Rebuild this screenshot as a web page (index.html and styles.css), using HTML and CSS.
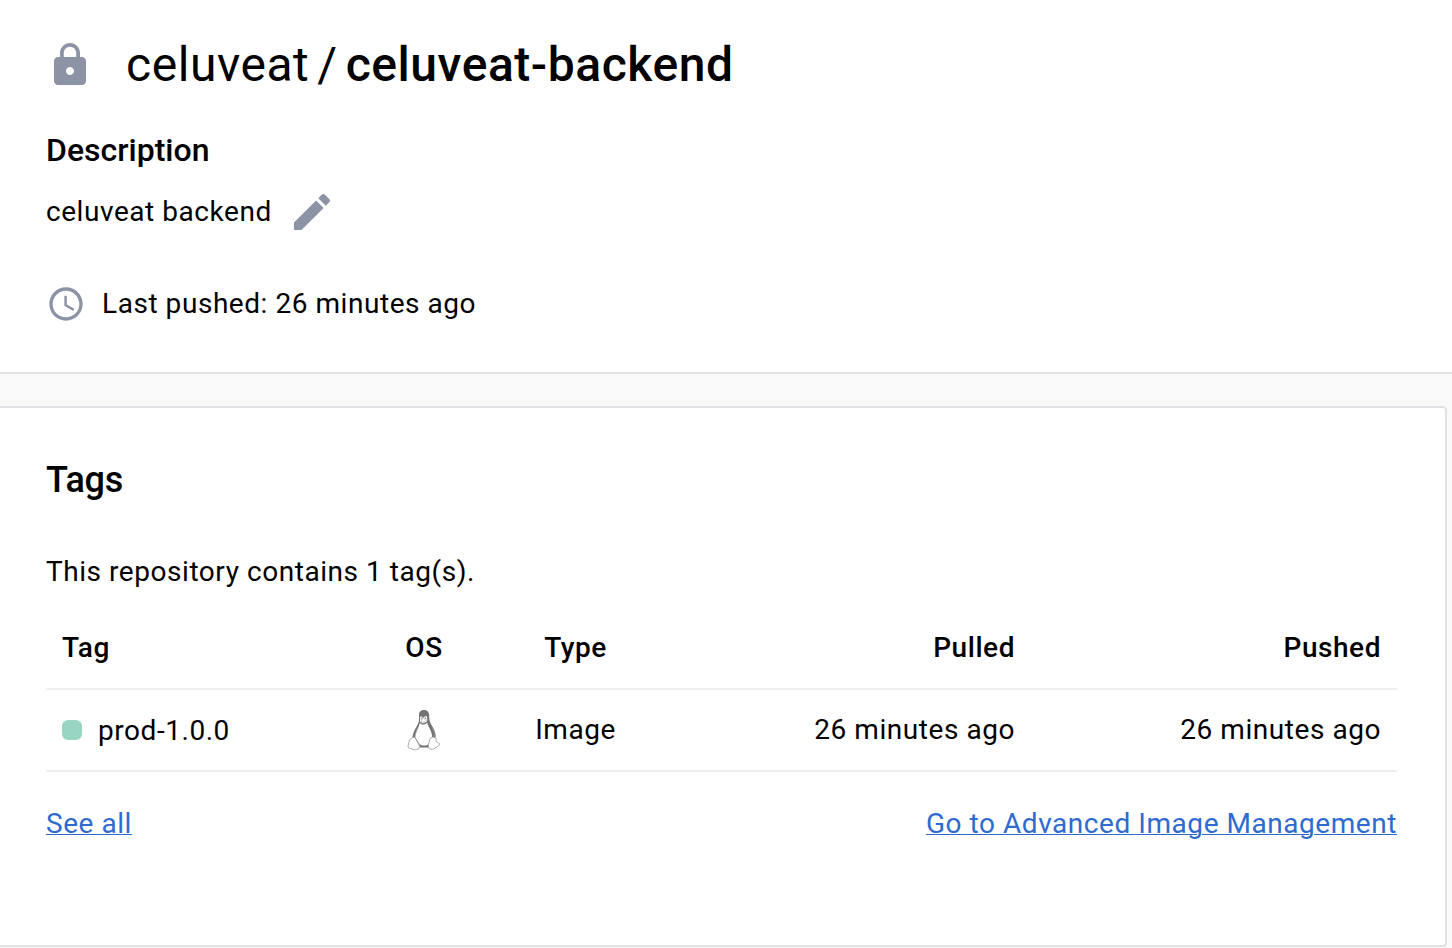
FILE: index.html
```html
<!DOCTYPE html>
<html lang="en">
<head>
<meta charset="utf-8">
<title>celuveat/celuveat-backend</title>
<link rel="stylesheet" href="styles.css">
</head>
<body>
<header class="repo">
  <div class="repo-title">
    <svg class="icon-lg" viewBox="0 0 24 24"><path d="M18 8h-1V6c0-2.76-2.24-5-5-5S7 3.240 7 6v2H6c-1.100 0-2 .9-2 2v10c0 1.100.9 2 2 2h12c1.100 0 2-.9 2-2V10c0-1.100-.9-2-2-2zm-6 9c-1.100 0-2-.9-2-2s.9-2 2-2 2 .9 2 2-.9 2-2 2zm3.100-9H8.900V6c0-1.710 1.390-3.100 3.100-3.100s3.100 1.390 3.100 3.100v2z"/></svg>
    <h1 class="name"><span class="owner">celuveat</span><span class="slash">/</span><span class="repo-name">celuveat-backend</span></h1>
  </div>
  <h2 class="subhead">Description</h2>
  <div class="description">
    <span class="description-text">celuveat backend</span>
    <svg class="icon-lg" viewBox="0 0 24 24"><path d="M3 17.250V21h3.750L17.810 9.940l-3.750-3.750L3 17.250zM20.710 7.040c.39-.39.39-1.020 0-1.410l-2.340-2.340c-.39-.39-1.020-.39-1.410 0l-1.830 1.830 3.750 3.750 1.830-1.830z"/></svg>
  </div>
  <div class="pushed">
    <svg class="icon-md" viewBox="0 0 24 24"><path d="M11.990 2C6.470 2 2 6.480 2 12s4.470 10 9.990 10C17.520 22 22 17.520 22 12S17.520 2 11.990 2zM12 20c-4.420 0-8-3.580-8-8s3.580-8 8-8 8 3.580 8 8-3.580 8-8 8zm.5-13H11v6l5.250 3.150.75-1.230-4.500-2.670z"/></svg>
    <span>Last pushed: 26 minutes ago</span>
  </div>
</header>
<main class="card">
  <h2 class="card-title">Tags</h2>
  <p class="summary">This repository contains 1 tag(s).</p>
  <div class="row head">
    <span>Tag</span><span class="center">OS</span><span class="center">Type</span><span class="right">Pulled</span><span class="right">Pushed</span>
  </div>
  <div class="row">
    <span class="tag"><i class="status"></i><span class="tag-name">prod-1.0.0</span></span>
    <span class="center os">
      <svg class="tux" viewBox="0 0 34 42">
        <path fill="#737373" d="M17 1c-4 0-5.200 2.500-5 6 .2 4 .2 6-1.700 9.200C8.200 20 5.300 24.800 5.600 29l3 5.500 4 4h9l4-8 3.200-3c-.3-5-2.300-8.500-4.600-12-1.700-2.600-1.900-5-2-8.500C22 3 20.500 1 17 1z"/>
        <path fill="#fff" d="M13 13.500c.7 2.600 5.200 3 7.200 0 .9 4.500 4.800 8.200 5 14.500l-3.500 7c-2 2-7 2-9 .3L8 28c.5-6 3.800-9 5-14.500z"/>
        <path fill="#fff" d="M13.300 9.800c-.8-2.300.8-3.300 2.100-1.500l.8.500 1.200-.8c1.300-1.900 3.400-1.100 2.600 1.300.8 1.500.6 4-3.200 5-3.200.2-4.700-2.300-3.500-4.500z"/>
        <path fill="none" stroke="#777" stroke-width=".8" stroke-dasharray="1 1" d="M13.800 10.800l2.600-1.500 3.100 1.600-3 2.200-2.700-1.300M14 13.500l2.500 1 3-1.500"/>
        <path fill="#737373" d="M14.300 8.500h1v1.300h-1zM18 8.500h1v1.300h-1z"/>
        <path fill="#fff" stroke="#999" stroke-width=".8" d="M2.500 31l3.300-2.800 2.400.6 2.800 5.200 1.900 3.200-1.700 3-3.700.7-6.100-2.300L1 37zM23 29.500l2.800-1.500 3 1 .5 3.300 3.700 3-2.800 2.600-4.600 2.600-3.600-.8-.8-3z"/>
        <path fill="none" stroke="#999" stroke-width=".8" d="M10 22c-2 2.500-2 5-1.800 6.500M25.300 19c2 3 2.300 6 1.500 8.700"/>
      </svg>
    </span>
    <span class="center">Image</span><span class="right">26 minutes ago</span><span class="right">26 minutes ago</span>
  </div>
  <div class="links">
    <a class="link" href="#">See all</a>
    <a class="link" href="#">Go to Advanced Image Management</a>
  </div>
</main>
</body>
</html>
```
FILE: styles.css
```css
* { box-sizing: border-box; }
body {
  margin: 0;
  height: 948px;
  overflow: hidden;
  background: #f9f9fa;
  color: #000;
  font: 400 28px/40px Roboto, sans-serif;
  letter-spacing: 0.55px;
}
h1, h2, p { margin: 0; }
svg { display: block; flex: none; }
.repo {
  height: 374px;
  padding: 41px 46px 0;
  background: #fff;
  border-bottom: 2px solid #e1e2e6;
}
.repo svg { fill: #8b93a5; }
.icon-lg { width: 48px; height: 48px; }
.icon-md { width: 40px; height: 40px; }
.repo-title { display: flex; gap: 32px; }
.name { display: flex; font-size: 48px; line-height: 48px; font-weight: 400; letter-spacing: 0.55px; }
.slash { margin: 0 8px; }
.repo-name { font-weight: 500; }
.subhead { margin-top: 41px; font-size: 32px; line-height: 40px; font-weight: 500; letter-spacing: 0; }
.description { display: flex; align-items: center; gap: 16px; margin-top: 18px; }
.pushed { display: flex; gap: 16px; margin-top: 48px; }
.card {
  width: 1447px;
  height: 541px;
  margin-top: 32px;
  padding: 52px 48px 0 46px;
  background: #fff;
  border: 2px solid #e1e2e6;
  border-left: 0;
  border-radius: 0 4px 4px 0;
}
.card-title { font-size: 36px; line-height: 40px; font-weight: 500; letter-spacing: -0.2px; }
.summary { margin-top: 52px; }
.row {
  display: grid;
  grid-template-columns: 296px 132px 171px 354px 1fr;
  align-items: center;
  height: 82px;
  padding: 0 16px;
  border-bottom: 2px solid #eeeeef;
}
.head { height: 98px; padding-top: 16px; font-weight: 500; }
.center { text-align: center; }
.right { text-align: right; }
.tag { display: flex; align-items: center; gap: 16px; }
.tag-name { padding-top: 2px; }
.status { width: 20px; height: 20px; border-radius: 6px; background: #99d5c3; }
.tux { width: 34px; height: 42px; margin: 0 auto; }
.links { display: flex; justify-content: space-between; margin-top: 32px; }
.link { color: #2f6bcf; text-decoration: underline; text-decoration-thickness: 1px; }
```
